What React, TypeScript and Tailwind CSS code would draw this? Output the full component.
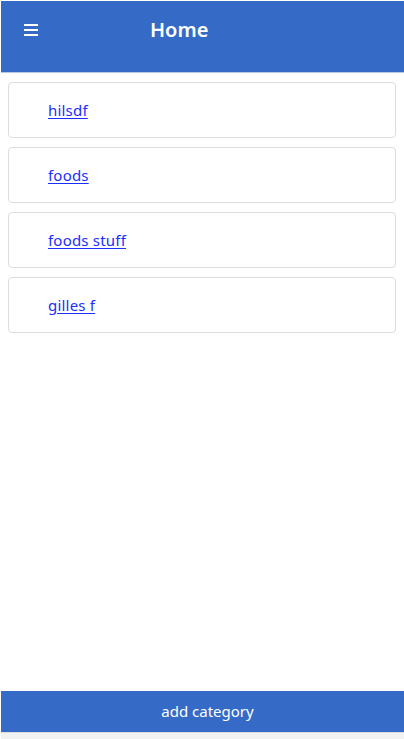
import React from "react";

export default function App() {
  const categories = ["hilsdf", "foods", "foods stuff", "gilles f"];

  return (
    <div
      className="flex h-[739px] flex-col bg-white pl-px pt-px"
      style={{ fontFamily: '"Noto Sans", "Open Sans", sans-serif' }}
    >
      <header className="flex h-[72px] shrink-0 items-start border-b border-[#b4c7ea] bg-[#356bc6] text-white">
        <button className="mt-[23px] ml-[23px] flex w-[14px] flex-col gap-[3px]">
          <span className="block h-[2px] w-[14px] bg-white" />
          <span className="block h-[2px] w-[14px] bg-white" />
          <span className="block h-[2px] w-[14px] bg-white" />
        </button>
        <h1 className="mt-[15px] ml-[112px] text-[20px] font-semibold leading-[28px]">
          Home
        </h1>
      </header>

      <main className="flex flex-1 flex-col gap-[9px] pl-[7px] pr-[8px] pt-[9px]">
        {categories.map((c, idx) => (
          <div
            key={c + idx}
            className="flex h-[56px] items-center rounded-[4px] border border-[#dddddd] pl-[39px]"
          >
            <a
              href="#"
              className="text-[15px] tracking-[0.2px] text-[#1a2eff] underline underline-offset-2"
            >
              {c}
            </a>
          </div>
        ))}
      </main>

      <button className="flex h-[41px] shrink-0 items-center justify-center bg-[#356bc6] pl-[10px] text-[15px] text-white">
        add category
      </button>
      <div className="h-[7px] shrink-0 border-t border-[#dcdcdc] bg-[#f2f2f2]" />
    </div>
  );
}
